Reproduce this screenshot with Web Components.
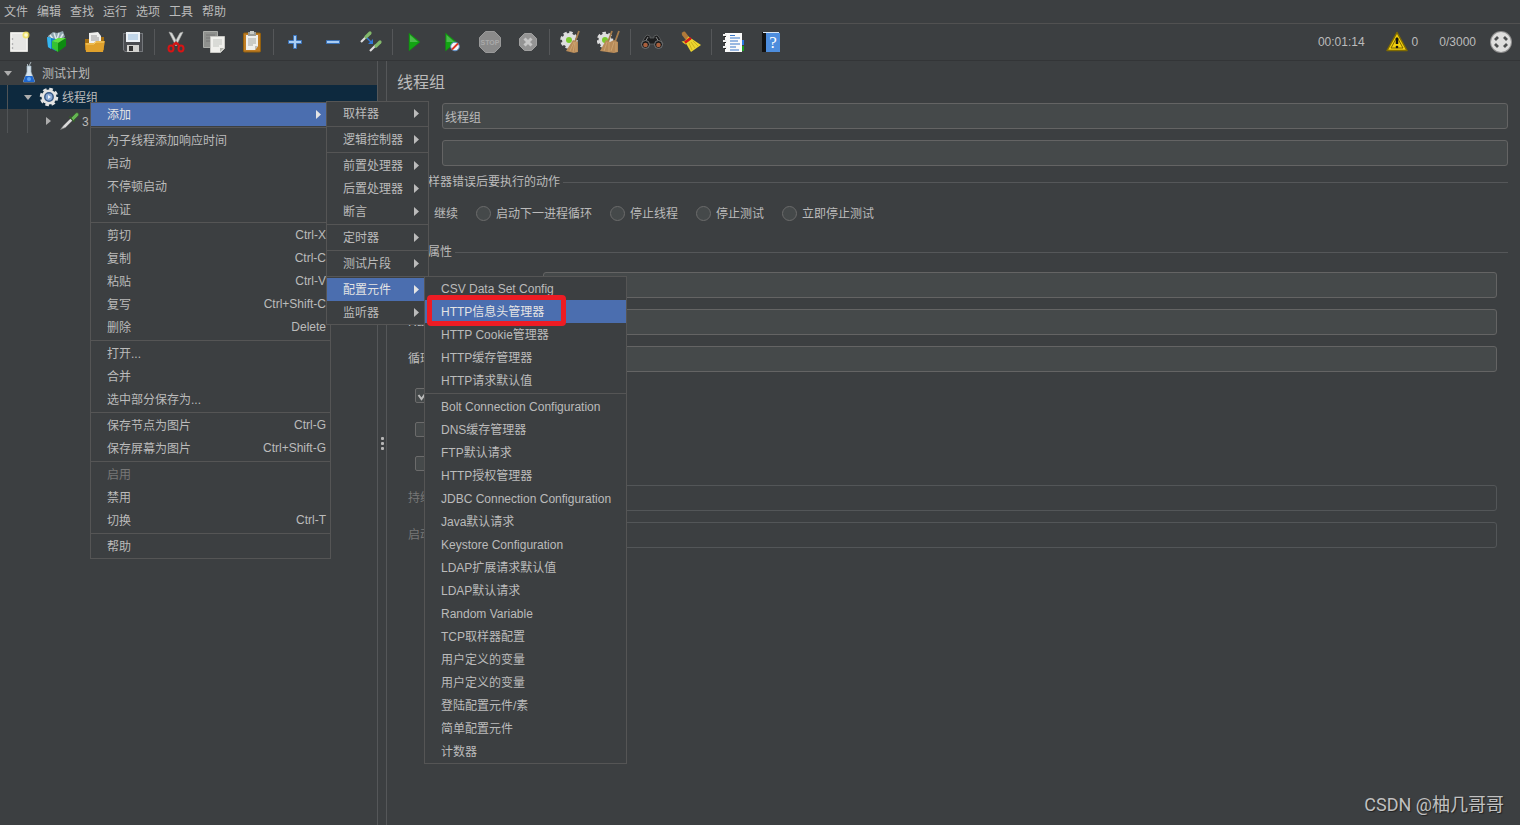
<!DOCTYPE html>
<html lang="zh-CN">
<head>
<meta charset="utf-8">
<title>JMeter</title>
<style>
  html, body { margin: 0; height: 100%; }
  body {
    background: #3c3f41; color: #bbbbbb;
    font: 12px/16px "Liberation Sans", "Noto Sans CJK SC", sans-serif;
    overflow: hidden;
    --line: #515151; --field: #45494a; --field-line: #646464; --select: #4b6eaf;
  }
</style>
</head>
<body>
<jm-app></jm-app>
<script>
const ICONS = {
  new: `<path d="M3.500 2.500h17v19h-17z" fill="#f2f2f0" stroke="#dcdcd8"/><path d="M5 4h14v16H5z" fill="#e6e6e4"/><g fill="#999"><circle cx="5.500" cy="9" r=".8"/><circle cx="5.500" cy="14" r=".8"/><circle cx="5.500" cy="18" r=".8"/></g><circle cx="19" cy="5" r="3.500" fill="#f2e24e" opacity=".75"/><circle cx="19" cy="5" r="1.800" fill="#fffbd0"/>`,
  templates: `<path d="M3 6l5-4 4 1 6-2 2 6-8 5-9-2z" fill="#8fa3ad"/><path d="M5 5l3 4M9 3l2 6M14 3l-2 6M18 4l-3 5" stroke="#dfe9ec" stroke-width="1.500"/><path d="M2 7l9 2v12l-8-4z" fill="#1383c8"/><path d="M2 7l4 1v11l-3-2z" fill="#35b5ee"/><path d="M7 11l6 2v9l-6-4z" fill="#35c332"/><path d="M13 13l8-5v8l-8 6z" fill="#0d8a10"/><path d="M7 11l6-3 8 0-8 5z" fill="#5fe03e"/>`,
  open: `<path d="M2 9h8l2-2h9v13H2z" fill="#a36d10"/><path d="M6 3l9-1 3 4v9H6z" fill="#f0f0ee"/><path d="M8 6h6M8 8h8M8 10h8" stroke="#999"/><path d="M2 13h9l2-2h9l-2 11H3z" fill="#e0a12c"/><path d="M3 14h8l2-2h8" stroke="#f6cf6c" fill="none"/>`,
  save: `<path d="M2 3h20v19H4l-2-2z" fill="#74777b"/><path d="M3 4h18v17H4l-1-1z" fill="#4a4c50"/><path d="M5 2h14v10H5z" fill="#edf2f6"/><path d="M7 5h10M7 7h10M7 9h10" stroke="#94b9db"/><path d="M6 15h12v7H6z" fill="#d2d2cf"/><path d="M8 16h4v5H8z" fill="#333"/>`,
  cut: `<path d="M5 2l3 1 6 11-2 2zM19 2l-3 1-6 11 2 2z" fill="#d8dad8" stroke="#a8aaa8" stroke-width=".6"/><path d="M9 15l3-2 3 2" stroke="#d31414" stroke-width="2.500" fill="none"/><ellipse cx="7" cy="18.500" rx="2.500" ry="3" fill="none" stroke="#d81414" stroke-width="2"/><ellipse cx="17" cy="18.500" rx="2.500" ry="3" fill="none" stroke="#d81414" stroke-width="2"/>`,
  copy: `<path d="M1.500 1.500h14v16h-14z" fill="#8f918e" stroke="#aaaca8"/><path d="M4 5h9M4 8h6M4 11h6" stroke="#777"/><path d="M8.500 6.500h14v12l-4 4h-10z" fill="#f0f0ec" stroke="#c7c7c3"/><path d="M11 10h9M11 12h9M11 14h9M11 16h6" stroke="#c2c5c0"/><path d="M18 22v-4h4z" fill="#b0b2ab"/>`,
  paste: `<rect x="3.500" y="3" width="17" height="19" rx="1" fill="#c07d24" stroke="#93600f"/><path d="M6 5h12v11l-3 4H6z" fill="#efefed"/><path d="M8 2h8v4H8z" fill="#9a9c98"/><path d="M10 1h4v3h-4z" fill="#c9cbc7"/><path d="M8 9h8M8 11h8M8 13h8M8 15h5" stroke="#a5a7a3"/><path d="M15 20v-4h3z" fill="#bbb"/>`,
  plus: `<path d="M10.500 5.500h3v5h5v3h-5v5h-3v-5h-5v-3h5z" fill="#a9cdf3" stroke="#3a72b8"/>`,
  minus: `<path d="M5.500 10.500h13v3h-13z" fill="#a9cdf3" stroke="#3a72b8"/>`,
  toggle: `<path d="M2 12l6-6" stroke="#dedede" stroke-width="2.200"/><path d="M7 7l4-4" stroke="#83b96b" stroke-width="3.200" stroke-linecap="round"/><path d="M11 21l6-6" stroke="#dedede" stroke-width="2.200"/><path d="M17 16l4-4" stroke="#83b96b" stroke-width="3.200" stroke-linecap="round"/><path d="M8 8l4 4" stroke="#3178d8" stroke-width="1.500"/><path d="M14 9v5H9z" fill="#3178d8"/>`,
  start: `<path d="M7 3l11 9L7 21z" fill="#12a512" stroke="#1a7a1a" stroke-width=".6"/><path d="M8 5l8 7H8z" fill="#4abb4a"/>`,
  startNo: `<path d="M5.500 3l11 9-11 9z" fill="#12a512" stroke="#1a7a1a" stroke-width=".6"/><path d="M6.500 5l8 7h-8z" fill="#4abb4a"/><circle cx="15" cy="16.500" r="4.300" fill="#f2f5f8" stroke="#5b8ec9"/><path d="M12 19.500l6-6" stroke="#d32" stroke-width="1.800"/>`,
  stop: `<path d="M7.500 1.500h9l6 6v9l-6 6h-9l-6-6v-9z" fill="#8a8a8a" stroke="#999"/><text x="12" y="15" text-anchor="middle" font-family="Liberation Sans, sans-serif" font-size="7" font-weight="700" fill="#a9a9a9">STOP</text>`,
  shutdown: `<path d="M8.500 3.500h7l5 5v7l-5 5h-7l-5-5v-7z" fill="#949494" stroke="#a0a0a0"/><path d="M8.500 8.500l7 7M15.500 8.500l-7 7" stroke="#c6c6c6" stroke-width="3"/>`,
  clear: `<circle cx="10" cy="10" r="7" fill="none" stroke="#dcdcdc" stroke-width="3.500" stroke-dasharray="3.200 2.300"/><circle cx="10" cy="10" r="7" fill="#dedede"/><circle cx="10" cy="10" r="3" fill="#78c82d"/><path d="M20 1l-4 11" stroke="#a57c4c" stroke-width="1.800"/><path d="M14 10l5 2 0 10-4 1-8-2z" fill="#b88b59"/><path d="M15 12l-4 9M16 12l-2 10M17 12v10" stroke="#d0a873" stroke-width=".8"/>`,
  clearAll: `<circle cx="8" cy="10" r="6.500" fill="none" stroke="#dcdcdc" stroke-width="3.500" stroke-dasharray="3.200 2.300"/><circle cx="8" cy="10" r="6.500" fill="#dedede"/><circle cx="8" cy="10" r="3" fill="#78c82d"/><path d="M15 1l-4 11M22 1l-4 11" stroke="#a57c4c" stroke-width="1.800"/><path d="M9 10l4 2 4-2 4 2v10l-4 1-14-2z" fill="#b88b59"/><path d="M10 12l-3 9M12 12v10M17 12l-3 9M19 12v10" stroke="#d0a873" stroke-width=".8"/>`,
  find: `<path d="M5 7l2-2 3 1v2h4V6l3-1 2 2 4 7H1z" fill="#1d1e1f" stroke="#686a6c" stroke-width=".7"/><path d="M8 7l-3 5M16 7l3 5" stroke="#8b8d8e"/><circle cx="5.500" cy="14.500" r="4" fill="#191a1b" stroke="#77797a"/><circle cx="18.500" cy="14.500" r="4" fill="#191a1b" stroke="#77797a"/><circle cx="5.500" cy="15" r="2.300" fill="#a9603d"/><circle cx="18.500" cy="15" r="2.300" fill="#a9603d"/>`,
  reset: `<path d="M6 4l3 4" stroke="#b07a3a" stroke-width="4.500" stroke-linecap="round"/><path d="M3.500 11.500c3 0 5-2 7-5l4 3-7 5z" fill="#e9ce25"/><path d="M6 11.500l6-4.500 2 2-6 5z" fill="#d41a19"/><path d="M8 13.500l6-4.500 9 6-10 7z" fill="#ecd52f"/><path d="M11 13l3 7M13 12l4 6M15 11l5 5" stroke="#bfa312" stroke-width=".7"/>`,
  log: `<path d="M4 3h17v19H4z" fill="#fafafa"/><path d="M21 10h2v5h-2z" fill="#2a78e0"/><path d="M21 16h2v5h-2z" fill="#1a9b20"/><path d="M9 5.500h5M9 8h10M9 11h8M9 14h10M9 17h6M9 20h9" stroke="#3977c8" stroke-width="1.200"/><path d="M4 4v16" stroke="#222" stroke-width="2" stroke-dasharray="3 3"/><path d="M2 5h4M2 11h4M2 17h4" stroke="#eee" stroke-width="2"/>`,
  help: `<path d="M3 2h4v20H3z" fill="#111"/><path d="M7 3h14v19H7z" fill="#4d8ddd"/><path d="M4 2.500h16" stroke="#d7e4f2"/><text x="14" y="18" text-anchor="middle" font-family="Liberation Serif, serif" font-size="17" fill="#fff">?</text>`,
  warn: `<path d="M12 2.500l10 18H2z" fill="#f2cf0d" stroke="#806b00" stroke-width="1.500" stroke-linejoin="round"/><path d="M12 7l6 11H6z" fill="none" stroke="#5f5000" stroke-width=".8"/><path d="M12 8v6" stroke="#111" stroke-width="2.500"/><circle cx="12" cy="17" r="1.300" fill="#111"/>`,
  threads: `<circle cx="12" cy="12" r="11" fill="#8e8e8e"/><circle cx="12" cy="12" r="10" fill="#dededd"/><path d="M6 10l3-3M15 7l3 3M18 14l-3 3M9 17l-3-3" stroke="#4c4e4f" stroke-width="2.800"/>`,
  flask: `<path d="M10.500 6V3M14 1l-2 4" stroke="#aab5bb"/><path d="M10 5v6L6.500 20v1h11v-1L14 11V5z" fill="#d5e2ec" stroke="#9fb3c0" stroke-width=".7"/><path d="M8.500 15h7l2 5v1h-11v-1z" fill="#1f66cc"/><circle cx="12" cy="18" r="2" fill="#5ea3f2"/>`,
  gear: `<circle cx="12" cy="12" r="7.500" fill="none" stroke="#e2e2e2" stroke-width="3.500" stroke-dasharray="3.400 2.490"/><circle cx="12" cy="12" r="7.500" fill="#e4e4e2"/><circle cx="12" cy="12" r="4.200" fill="#88a8d3" stroke="#365985" stroke-width="1.500"/><path d="M11 10l3 2-3 2z" fill="#eef4fb"/>`,
  pipette: `<path d="M3.500 20.500l3-4 8-8 2 2-8 8z" fill="#dadada" stroke="#777" stroke-width=".6"/><path d="M12.500 7.500l5 5" stroke="#315b26" stroke-width="2"/><path d="M14 9l4-4c2-3 5 0 3 2l-4.500 4.500z" fill="#65b553" stroke="#365f2d" stroke-width=".7"/>`
};
const esc = (s) => s.replace(/&/g, '&amp;').replace(/</g, '&lt;');

class Base extends HTMLElement {
  connectedCallback() {
    if (this.shadowRoot) return;
    const t = document.createElement('template');
    t.innerHTML = `<style>*{box-sizing:border-box}${this.css()}</style>${this.html()}`;
    this.attachShadow({ mode: 'open' }).append(t.content.cloneNode(true));
  }
  at(n) { return this.getAttribute(n) || ''; }
}

customElements.define('jm-icon', class extends Base {
  css() { return ':host{display:block;width:24px;height:24px;flex:none}svg{display:block}'; }
  html() { return `<svg width="24" height="24" viewBox="0 0 24 24" aria-hidden="true">${ICONS[this.at('name')]}</svg>`; }
});

customElements.define('jm-menubar', class extends Base {
  css() { return `:host{display:flex;height:24px;box-sizing:border-box;border-bottom:1px solid var(--line)}
    button{all:unset;padding:1px 5px 0 4px;line-height:22px}`; }
  html() { return ['文件', '编辑', '查找', '运行', '选项', '工具', '帮助'].map(s => `<button>${s}</button>`).join(''); }
});

customElements.define('jm-toolbar', class extends Base {
  css() { return `:host{display:flex;box-sizing:border-box;align-items:center;height:37px;border-bottom:1px solid #333537;padding-right:7px}
    button{all:unset;width:38px;height:24px;display:flex;justify-content:center}
    i{width:1px;height:26px;margin:0 2px;background:#555759}
    .space{flex:1} .warn{display:flex;align-items:center;gap:3px;margin:0 21px 0 20px} .all{margin-right:13px}`; }
  html() {
    const groups = [
      [['new', '新建'], ['templates', '模板'], ['open', '打开'], ['save', '保存']],
      [['cut', '剪切'], ['copy', '复制'], ['paste', '粘贴']],
      [['plus', '展开'], ['minus', '收起'], ['toggle', '切换']],
      [['start', '启动'], ['startNo', '不停顿启动'], ['stop', '停止'], ['shutdown', '关闭']],
      [['clear', '清除'], ['clearAll', '清除全部']],
      [['find', '查找'], ['reset', '重置查找']],
      [['log', '函数助手'], ['help', '帮助']]
    ];
    return groups.map(g => g.map(([n, l]) => `<button aria-label="${l}"><jm-icon name="${n}"></jm-icon></button>`).join('')).join('<i></i>')
      + `<span class="space"></span><span>00:01:14</span><span class="warn"><jm-icon name="warn"></jm-icon><span>0</span></span><span class="all">0/3000</span><jm-icon name="threads"></jm-icon>`;
  }
});

customElements.define('jm-tree-row', class extends Base {
  css() { return `:host{display:flex;align-items:center;height:24px;white-space:nowrap}
    :host([selected]){background:#0d293e}
    .guide{width:20px;height:24px;flex:none;border-left:1px solid #515456;margin-left:7px;margin-right:-7px}
    .arrow{width:16px;display:flex;justify-content:center;flex:none}
    .arrow svg{display:block} jm-icon{margin:0 1px} .text{padding-top:2px}`; }
  html() {
    const a = this.hasAttribute('open') ? 'M1 3h8l-4 5z' : 'M3 1l5 4-5 4z';
    return '<span class="guide"></span>'.repeat(+this.at('level'))
      + `<span class="arrow"><svg width="10" height="10" viewBox="0 0 10 10"><path d="${a}" fill="#adadad"/></svg></span><jm-icon name="${this.at('icon')}"></jm-icon><span class="text"><slot></slot></span>`;
  }
});

customElements.define('jm-tree', class extends Base {
  css() { return ':host{display:block;border-right:1px solid #555759;overflow:hidden}'; }
  html() { return `<jm-tree-row level="0" icon="flask" open>测试计划</jm-tree-row>
    <jm-tree-row level="1" icon="gear" open selected>线程组</jm-tree-row>
    <jm-tree-row level="2" icon="pipette">3</jm-tree-row>`; }
});

customElements.define('jm-splitter', class extends Base {
  css() { return `:host{display:flex;flex-direction:column;align-items:center;justify-content:center;gap:2px}
    i{width:3px;height:3px;border-radius:1px;background:#b5b5b5}`; }
  html() { return '<i></i><i></i><i></i>'; }
});

customElements.define('jm-field', class extends Base {
  css() { return `:host{display:flex;align-items:center;height:26px}
    label{flex:none;width:var(--label,45px);white-space:nowrap}
    input{flex:1;min-width:0;height:26px;margin:0;padding:0 2px;border:1px solid var(--field-line);border-radius:3px;background:var(--field);color:inherit;font:inherit;outline:0}
    input:disabled{background:transparent;border-color:#535658} :host([disabled]) label{color:#777}`; }
  html() { return `<label for="f">${esc(this.at('label'))}</label><input id="f" value="${this.at('value')}" ${this.hasAttribute('disabled') ? 'disabled' : ''}>`; }
});

customElements.define('jm-choice', class extends Base {
  css() { return `:host{display:flex;align-items:center}
    label{display:flex;align-items:center;gap:5px;white-space:nowrap}
    input{appearance:none;flex:none;margin:0;width:15px;height:15px;border:1px solid #6b6b6b;background:var(--field);border-radius:2px}
    input[type=radio]{border-radius:50%}
    input[type=radio]:checked{box-shadow:inset 0 0 0 4px var(--field);background:#bbb}
    .box{display:grid} .box>*{grid-area:1/1} svg{visibility:hidden} input:checked+svg{visibility:visible} .text{padding-top:2px}`; }
  html() { const r = this.at('type') === 'radio';
    return `<label><span class="box"><input type="${this.at('type')}" aria-label="${this.at('name')}" ${this.hasAttribute('checked') ? 'checked' : ''}>${r ? '' : '<svg width="15" height="15" viewBox="0 0 15 15"><path d="M3.500 7l3 4 5-7" fill="none" stroke="#bbb" stroke-width="2"/></svg>'}</span><span class="text"><slot></slot></span></label>`; }
});

customElements.define('jm-group', class extends Base {
  css() { return `:host{display:block} fieldset{margin:0;padding:0;border:0;border-top:1px solid #555759;min-width:0}
    legend{margin-left:4px;padding:0 3px;line-height:16px}`; }
  html() { return `<fieldset><legend>${this.at('heading')}</legend><slot></slot></fieldset>`; }
});

customElements.define('jm-thread-panel', class extends Base {
  css() { return `:host{display:block;border-left:1px solid #555759;padding:0 12px 0 10px;min-width:0}
    h1{margin:0;padding-top:2px;font-size:16px;line-height:40px;font-weight:400}
    .stack{display:flex;flex-direction:column;gap:11px}
    .errors{margin-top:8px} .props{margin-top:16px}
    .radios{display:flex;gap:18px;height:30px;margin-top:8px;padding-left:17px}
    .form{padding:12px 11px 0;--label:135px}
    .checks{display:grid;grid-auto-rows:34px;padding:6px 0 5px 7px}`; }
  html() { return `<h1>线程组</h1>
    <div class="stack"><jm-field label="名称：" value="线程组"></jm-field><jm-field label="注释："></jm-field></div>
    <jm-group class="errors" heading="在取样器错误后要执行的动作"><div class="radios">
      <jm-choice type="radio" name="继续" checked>继续</jm-choice><jm-choice type="radio" name="启动下一进程循环">启动下一进程循环</jm-choice>
      <jm-choice type="radio" name="停止线程">停止线程</jm-choice><jm-choice type="radio" name="停止测试">停止测试</jm-choice>
      <jm-choice type="radio" name="立即停止测试">立即停止测试</jm-choice></div></jm-group>
    <jm-group class="props" heading="线程属性"><div class="form">
      <div class="stack"><jm-field label="线程"></jm-field><jm-field label="Ramp"></jm-field><jm-field label="循环"></jm-field></div>
      <div class="checks"><jm-choice type="checkbox" name="Same user on each iteration" checked></jm-choice><jm-choice type="checkbox" name="延迟创建线程直到需要"></jm-choice><jm-choice type="checkbox" name="调度器"></jm-choice></div>
      <div class="stack"><jm-field label="持续" disabled></jm-field><jm-field label="启动" disabled></jm-field></div>
    </div></jm-group>`; }
});

customElements.define('jm-menu-item', class extends Base {
  css() { return `:host{display:block;height:23px}
    button{all:unset;box-sizing:border-box;display:flex;align-items:center;width:100%;height:23px;padding:0 4px 0 16px;white-space:nowrap}
    :host([selected]){background:var(--select);color:#e4e4e4} :host([disabled]){color:#777}
    .key{margin-left:auto;padding-bottom:2px} svg{margin:0 5px 1px auto;display:block}`; }
  html() { return `<button ${this.hasAttribute('disabled') ? 'disabled' : ''}><slot></slot>${this.at('key') ? `<span class="key">${this.at('key')}</span>` : ''}${this.hasAttribute('sub') ? '<svg width="5" height="9" viewBox="0 0 5 9"><path d="M0 0l5 4.500-5 4.500z" fill="currentColor"/></svg>' : ''}</button>`; }
});

customElements.define('jm-menu', class extends Base {
  css() { return `:host{display:block;position:absolute;box-sizing:border-box;background:#3c3f41;border:1px solid #555555}
    ::slotted(hr){height:1px;margin:1px 0;border:0;background:#555555}`; }
  html() { return '<slot></slot>'; }
});

const menu = (cls, rows) => `<jm-menu class="${cls}">` + rows.map(r => {
  if (r === '-') return '<hr>';
  const [label, key, flags = ''] = [].concat(r);
  return `<jm-menu-item ${key ? `key="${key}"` : ''} ${flags}>${label}</jm-menu-item>`;
}).join('') + '</jm-menu>';
const sub = (s, extra = '') => [s, '', 'sub ' + extra];

customElements.define('jm-app', class extends Base {
  css() { return `:host{display:flex;flex-direction:column;min-height:100vh;position:relative}
    main{flex:1;display:grid;grid-template-columns:378px 8px minmax(0,1fr)}
    .context{left:90px;top:102px;width:241px} .add{left:326px;top:101px;width:103px} .config{left:424px;top:276px;width:203px}
    .mark{position:absolute;left:427px;top:295px;width:139px;height:31px;border:5px solid #ed1c24;border-radius:4px;pointer-events:none}
    .credit{position:absolute;right:16px;bottom:8px;font:18px/24px Roboto,"Noto Sans CJK SC",sans-serif;color:#c0c0c0;text-shadow:1px 1px 1px #222}`; }
  html() { return `<jm-menubar></jm-menubar><jm-toolbar></jm-toolbar>
    <main><jm-tree></jm-tree><jm-splitter></jm-splitter><jm-thread-panel></jm-thread-panel></main>`
    + menu('context', [sub('添加', 'selected'), '-', '为子线程添加响应时间', '启动', '不停顿启动', '验证', '-',
      ['剪切', 'Ctrl-X'], ['复制', 'Ctrl-C'], ['粘贴', 'Ctrl-V'], ['复写', 'Ctrl+Shift-C'], ['删除', 'Delete'], '-',
      '打开...', '合并', '选中部分保存为...', '-', ['保存节点为图片', 'Ctrl-G'], ['保存屏幕为图片', 'Ctrl+Shift-G'], '-',
      ['启用', '', 'disabled'], '禁用', ['切换', 'Ctrl-T'], '-', '帮助'])
    + menu('add', [sub('取样器'), '-', sub('逻辑控制器'), '-', sub('前置处理器'), sub('后置处理器'), sub('断言'), '-',
      sub('定时器'), '-', sub('测试片段'), '-', sub('配置元件', 'selected'), sub('监听器')])
    + menu('config', ['CSV Data Set Config', ['HTTP信息头管理器', '', 'selected'], 'HTTP Cookie管理器', 'HTTP缓存管理器', 'HTTP请求默认值', '-',
      'Bolt Connection Configuration', 'DNS缓存管理器', 'FTP默认请求', 'HTTP授权管理器', 'JDBC Connection Configuration', 'Java默认请求',
      'Keystore Configuration', 'LDAP扩展请求默认值', 'LDAP默认请求', 'Random Variable', 'TCP取样器配置', '用户定义的变量', '用户定义的变量',
      '登陆配置元件/素', '简单配置元件', '计数器'])
    + `<div class="mark"></div><div class="credit">CSDN @柚几哥哥</div>`; }
});
</script>
</body>
</html>
